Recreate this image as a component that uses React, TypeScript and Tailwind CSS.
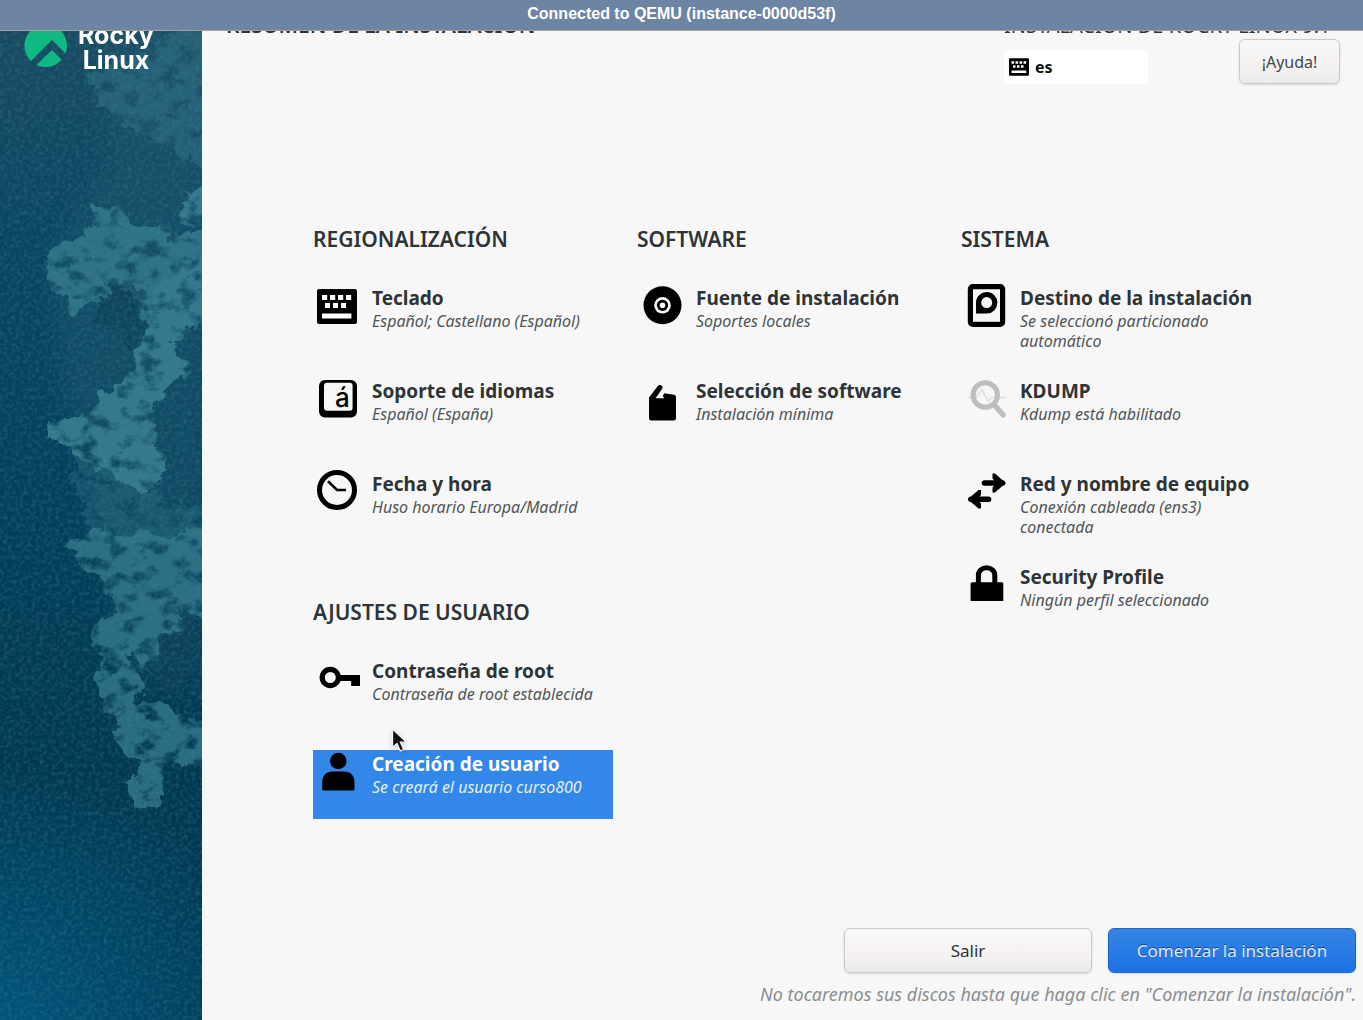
import type { ReactNode } from "react";

type Spoke = { title: string; status: string; icon: ReactNode; selected?: boolean };

function Icon({ children }: { children: ReactNode }) {
  return (
    <svg aria-hidden="true" viewBox="0 0 48 48" className="h-12 w-12 shrink-0 overflow-visible" fill="#000">
      {children}
    </svg>
  );
}

function KeyboardShape() {
  return (
    <>
      <rect x="4" y="5" width="40" height="35" rx="2" />
      <g fill="#fff">
        {[9, 17, 25, 33].map((x) => (
          <rect key={x} x={x} y="11" width="5.2" height="5" />
        ))}
        {[12, 20, 28].map((x) => (
          <rect key={x} x={x} y="19" width="5" height="5" />
        ))}
        <rect x="9" y="29.5" width="29.4" height="5" />
      </g>
    </>
  );
}

const keyboardIcon = (
  <Icon>
    <KeyboardShape />
  </Icon>
);

const languageIcon = (
  <Icon>
    <rect x="6" y="3" width="38" height="37.5" rx="6" />
    <rect x="11" y="5.8" width="28.6" height="28" rx="3" fill="#f7f7f7" />
    <text x="22" y="30" fontFamily="Inter, sans-serif" fontWeight="500" fontSize="26">
      á
    </text>
  </Icon>
);

const clockIcon = (
  <Icon>
    <g fill="none" stroke="#000">
      <circle cx="24" cy="20" r="17.5" strokeWidth="5" />
      <path d="M15 11.3l9 8.700h9" strokeWidth="2.7" />
    </g>
  </Icon>
);

const discIcon = (
  <Icon>
    <circle cx="25.5" cy="21.3" r="19" />
    <circle cx="25.5" cy="21.3" r="8.3" fill="#f7f7f7" />
    <circle cx="25.5" cy="21.3" r="5.6" />
    <circle cx="25.5" cy="21.3" r="2.8" fill="#f7f7f7" />
  </Icon>
);

const packageIcon = (
  <Icon>
    <path d="M12 20.5 20.6 9.2Q22.8 7 25 9q1.200 1.300 0 3l-6.500 9.300h8.800L25.800 19l1.400-2.800L37 17.800q2 .3 2 2.200v21.200q0 2.300-2.300 2.300H14.300Q12 43.500 12 41.200Z" />
  </Icon>
);

const diskIcon = (
  <Icon>
    <rect x="9.4" y="2.6" width="32.200" height="37.800" rx="2.500" fill="#f7f7f7" stroke="#000" strokeWidth="5.200" />
    <path d="M15 29.500V18.600a10.700 10.700 0 1 1 10.700 10.900Z" />
    <circle cx="25.7" cy="18.6" r="5.5" fill="#f7f7f7" />
  </Icon>
);

const kdumpIcon = (
  <Icon>
    <g fill="none" strokeLinecap="round">
      <path d="M7 20.500h8l6-8 6 11.500 4-3.500h13" stroke="#e2e2e2" strokeWidth="2" />
      <circle cx="24.3" cy="18" r="12.2" stroke="#bebebe" strokeWidth="5" />
      <path d="m33.500 28 8.500 9.800" stroke="#bebebe" strokeWidth="5.500" />
    </g>
  </Icon>
);

const networkIcon = (
  <Icon>
    <g fill="none" stroke="#000" strokeWidth="5.6">
      <path d="M23.500 13h18M27.500 29.300H10" strokeLinecap="round" />
      <path d="M31.500 3.500h2.500l10.800 9.500L34 22.500h-2.500v-5l4-4.500-4-4.500ZM20 20h-2.500L6.700 29.300l10.800 9.300H20v-5l-4-4.300 4-4.300Z" fill="#000" stroke="none" />
    </g>
  </Icon>
);

const lockIcon = (
  <Icon>
    <path d="M17.400 21V12a8.200 7.200 0 0 1 16.400 0v9" fill="none" stroke="#000" strokeWidth="5" />
    <path d="M11 19.200h30.300l1 1V38H9.600V20.200Z" />
  </Icon>
);

const keyIcon = (
  <Icon>
    <circle cx="17.3" cy="20.500" r="8.1" fill="none" stroke="#000" strokeWidth="5.2" />
    <path d="M25 18h22v11h-8.800v-5H25Z" />
  </Icon>
);

const userIcon = (
  <Icon>
    <ellipse cx="25.3" cy="11" rx="8.2" ry="8.2" />
    <path d="M9.200 39V33q0-11.500 11-11.500h10.300q11 0 11 11.500v6q0 1.500-1.500 1.500H10.700q-1.500 0-1.500-1.500Z" />
  </Icon>
);

const regional: Spoke[] = [
  { title: "Teclado", status: "Español; Castellano (Español)", icon: keyboardIcon },
  { title: "Soporte de idiomas", status: "Español (España)", icon: languageIcon },
  { title: "Fecha y hora", status: "Huso horario Europa/Madrid", icon: clockIcon },
];
const software: Spoke[] = [
  { title: "Fuente de instalación", status: "Soportes locales", icon: discIcon },
  { title: "Selección de software", status: "Instalación mínima", icon: packageIcon },
];
const system: Spoke[] = [
  { title: "Destino de la instalación", status: "Se seleccionó particionado automático", icon: diskIcon },
  { title: "KDUMP", status: "Kdump está habilitado", icon: kdumpIcon },
  { title: "Red y nombre de equipo", status: "Conexión cableada (ens3) conectada", icon: networkIcon },
  { title: "Security Profile", status: "Ningún perfil seleccionado", icon: lockIcon },
];
const users: Spoke[] = [
  { title: "Contraseña de root", status: "Contraseña de root establecida", icon: keyIcon },
  { title: "Creación de usuario", status: "Se creará el usuario curso800", icon: userIcon, selected: true },
];

function Pointer() {
  return (
    <svg aria-hidden="true" viewBox="0 0 18 26" className="absolute -top-[22px] left-[78px] h-[26px] w-[18px] drop-shadow-sm">
      <path d="M1.500 1v18.500l4.500-4 3.300 7.500 3.400-1.500-3.300-7.300h6.300Z" fill="#111" stroke="#f4f4f4" strokeWidth="1.3" />
    </svg>
  );
}

function SpokeButton({ spoke }: { spoke: Spoke }) {
  return (
    <button
      type="button"
      className={
        spoke.selected
          ? "relative flex min-h-[69px] w-full items-start gap-[11px] bg-[#3387e8] text-left text-white"
          : "relative flex min-h-[69px] w-full items-start gap-[11px] text-left text-[#2e3436]"
      }
    >
      {spoke.icon}
      <span className="block min-w-0 pt-0.5 pr-3">
        <span className="block text-[19px] leading-[25px] font-bold whitespace-nowrap">{spoke.title}</span>
        <span className={spoke.selected ? "block text-base leading-5 text-[#e4effc] italic" : "block text-base leading-5 text-[#505557] italic"}>
          {spoke.status}
        </span>
      </span>
      {spoke.selected && <Pointer />}
    </button>
  );
}

function Category({ name, spokes }: { name: string; spokes: Spoke[] }) {
  return (
    <section>
      <h2 className="mb-[31px] text-[21px] leading-7 font-semibold whitespace-nowrap text-[#2e3436]">{name}</h2>
      <div className="flex flex-col gap-6">
        {spokes.map((s) => (
          <SpokeButton key={s.title} spoke={s} />
        ))}
      </div>
    </section>
  );
}

function Backdrop() {
  return (
    <svg aria-hidden="true" viewBox="0 31 202 989" preserveAspectRatio="xMinYMin slice" className="absolute inset-0 h-full w-full">
      <defs>
        <linearGradient id="sea" x1="0" y1="0" x2="0" y2="1">
          <stop offset="0" stopColor="#194a61" />
          <stop offset="0.2" stopColor="#0a4663" />
          <stop offset="0.45" stopColor="#03405c" />
          <stop offset="0.75" stopColor="#00384f" />
          <stop offset="1" stopColor="#003a5a" />
        </linearGradient>
        <radialGradient id="glow" gradientUnits="userSpaceOnUse" cx="0" cy="1020" r="260">
          <stop offset="0" stopColor="#005478" />
          <stop offset="1" stopColor="#005478" stopOpacity="0" />
        </radialGradient>
        <filter id="rough" x="-20%" y="-10%" width="140%" height="120%" colorInterpolationFilters="sRGB">
          <feTurbulence type="fractalNoise" baseFrequency="0.045" numOctaves="6" seed="11" result="n" />
          <feDisplacementMap in="SourceGraphic" in2="n" scale="34" xChannelSelector="R" yChannelSelector="G" result="d" />
          <feTurbulence type="fractalNoise" baseFrequency="0.05 0.07" numOctaves="6" seed="9" result="g" />
          <feColorMatrix in="g" type="matrix" values="0 0 0 0 0  0 0 0 0 0  0 0 0 0 0  4 0 0 0 -1.05" result="holes" />
          <feComposite in="d" in2="holes" operator="in" />
        </filter>
        <filter id="grain" x="0" y="0" width="100%" height="100%" colorInterpolationFilters="sRGB">
          <feTurbulence type="fractalNoise" baseFrequency="0.25" numOctaves="2" seed="2" />
          <feColorMatrix type="matrix" values="0 0 0 0 0.250  0 0 0 0 0.500  0 0 0 0 0.580  1.800 0 0 0 -0.7" />
        </filter>
        <filter id="soft" x="-30%" y="-30%" width="160%" height="160%">
          <feGaussianBlur stdDeviation="12" />
        </filter>
      </defs>
      <rect y="31" width="202" height="989" fill="url(#sea)" />
      <rect y="31" width="202" height="989" fill="url(#glow)" />
      <path d="M100 31h110v640H130L90 480 60 380 55 250 110 160Z" fill="#225a70" opacity="0.4" filter="url(#soft)" />
      <g filter="url(#rough)" fill="#357a8c">
        <path d="M85 75 150 45 225 15V190L170 150 110 115Z" opacity="0.45" />
        <path d="M180 200 225 175v65l-45-20Z" />
        <path d="m95 200 20 20 25 10 85 10v65l-45 25-15 28-15-10-8-38-14-22-13-5-20 20-20 8-17-15-8-28 10-30 30-5Z" opacity="0.85" />
        <path d="M150 290 225 235v85l-45 15-15 25-20-8Z" />
        <path d="m125 368 15-16 30-7 16 27-21 20-10 20-5 25 16 25-5 20-15 8-36-14-36-20-25-24v-14l40-10 30-24Z" />
        <path d="m70 455 75 30 80 35v50l-75-20-60-15Z" opacity="0.35" />
        <path d="m70 540 30-10 60 10 65-20v95l-40-3-25 38-10 12-20-7 10 45 85 30v50l-45-20-10 5-5 50-30-8-5-45-25-50-10-50v-30l20-30-10-20-30-25Z" opacity="0.8" />
      </g>
      <g filter="url(#rough)" fill="#0b3e57">
        <path d="m188 620 37 15v80l-45-15-25-15 10-35Z" opacity="0.9" />
        <path d="m105 290 28-8 10 30 4 25-12 14-25-20-15-20Z" opacity="0.6" />
      </g>
      <rect y="31" width="202" height="989" filter="url(#grain)" opacity="0.45" />
    </svg>
  );
}

function RockyLogo() {
  return (
    <div className="relative -mt-[8px] flex items-start gap-[10px] pl-6">
      <svg aria-hidden="true" viewBox="24 24 44 44" className="h-11 w-11 shrink-0">
        <defs>
          <clipPath id="disc">
            <circle cx="45.700" cy="46.800" r="21.300" />
          </clipPath>
        </defs>
        <g clipPath="url(#disc)" fill="#10b981">
          <path d="M20 20h50v39L52 41 29 64h-9Z" />
          <path d="m52 51 12 12v9H30Z" />
        </g>
      </svg>
      <div className="text-center font-['Inter',sans-serif] text-[25px] leading-[25px] font-bold text-white">
        Rocky
        <br />
        Linux
      </div>
    </div>
  );
}

export default function App() {
  return (
    <div className="flex min-h-screen flex-col bg-[#f7f7f7] font-['Noto_Sans',sans-serif]">
      <div className="h-[31px] shrink-0 border-b border-[#aaa09b] bg-[#6e84a3] text-center font-['Liberation_Sans',sans-serif] text-base leading-[27px] font-bold text-white">
        Connected to QEMU (instance-0000d53f)
      </div>
      <div className="flex flex-1 overflow-hidden">
        <aside className="relative w-[202px] shrink-0 overflow-hidden bg-[#04405c]">
          <Backdrop />
          <RockyLogo />
        </aside>
        <main className="flex min-w-0 flex-1 flex-col">
          <header className="-mt-[19px] flex items-start justify-between pr-[23px] pl-6">
            <h1 className="text-[21px] leading-[27px] font-semibold text-[#2e3436]">RESUMEN DE LA INSTALACIÓN</h1>
            <div className="w-[336px]">
              <p className="text-xl leading-[27px] whitespace-nowrap text-[#2e3436]">INSTALACIÓN DE ROCKY LINUX 9.1</p>
              <div className="flex items-end justify-between">
                <button type="button" className="flex h-[34px] w-36 items-center gap-[6px] bg-white pl-[5px] font-bold text-[#111]">
                  <svg aria-hidden="true" viewBox="4 5 40 35" className="h-[18px] w-5">
                    <KeyboardShape />
                  </svg>
                  es
                </button>
                <button
                  type="button"
                  className="h-[45px] w-[101px] rounded-md border border-[#cfc7c5] bg-linear-to-b from-[#f9f8f9] via-[#f6f2f2] to-[#ebebeb] text-base text-[#40474a] shadow-sm"
                >
                  ¡Ayuda!
                </button>
              </div>
            </div>
          </header>
          <div className="mt-[141px] grid grid-cols-[repeat(3,minmax(0,300px))] gap-6 pl-[111px]">
            <div className="flex flex-col gap-[59px]">
              <Category name="REGIONALIZACIÓN" spokes={regional} />
              <Category name="AJUSTES DE USUARIO" spokes={users} />
            </div>
            <Category name="SOFTWARE" spokes={software} />
            <Category name="SISTEMA" spokes={system} />
          </div>
          <footer className="mt-auto flex flex-col items-end gap-[7px] pr-[7px] pb-3">
            <div className="flex gap-4">
              <button
                type="button"
                className="h-[45px] w-[248px] rounded-md border border-[#cfc7c5] bg-linear-to-b from-[#f9f8f9] via-[#f6f2f2] to-[#ebebeb] text-[17px] text-[#2e3436] shadow-sm"
              >
                Salir
              </button>
              <button
                type="button"
                className="h-[45px] w-[248px] rounded-md border border-[#1b6acb] bg-linear-to-b from-[#3584e4] to-[#1c72e4] text-[17px] text-[#dfe9f7] shadow-sm text-shadow-[0_-1px_0_rgb(20_70_140)]"
              >
                Comenzar la instalación
              </button>
            </div>
            <p className="text-lg leading-7 text-[#8b8e8f] italic">No tocaremos sus discos hasta que haga clic en "Comenzar la instalación".</p>
          </footer>
        </main>
      </div>
    </div>
  );
}
